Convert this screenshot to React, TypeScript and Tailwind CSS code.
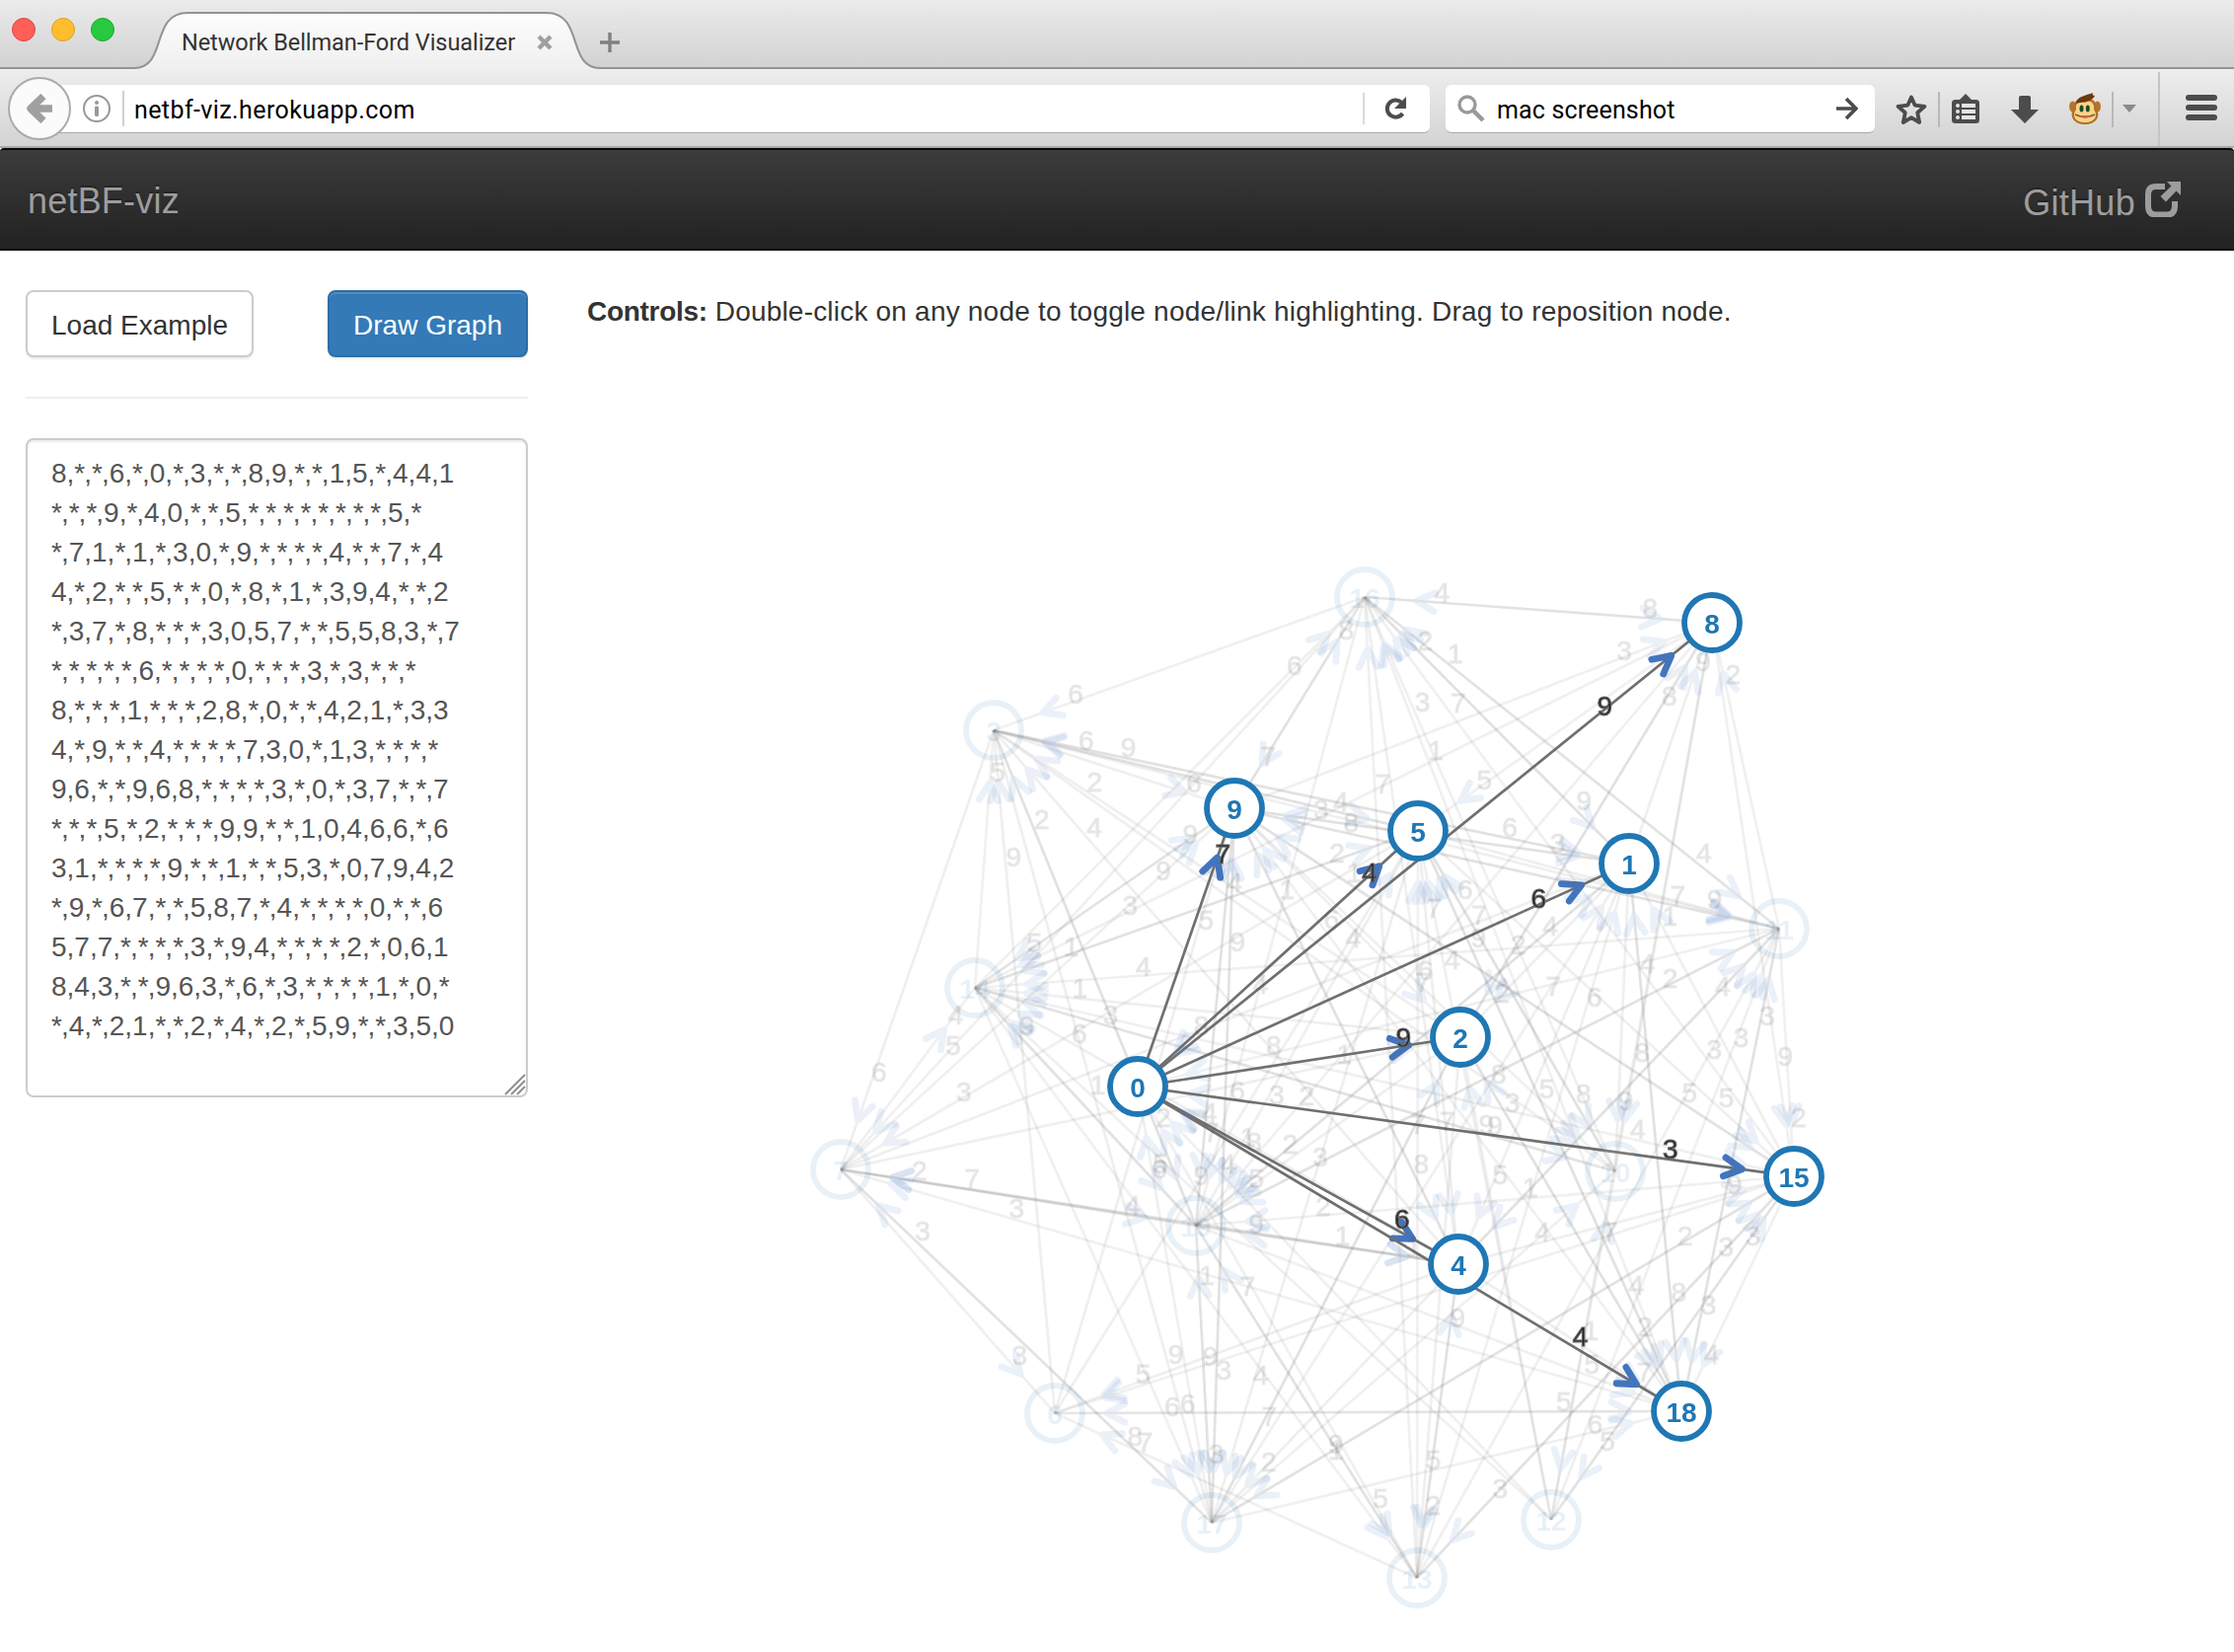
import React from "react";

type Point = [number, number];

const NODES: Point[] = [
  [1153, 1101],
  [1651, 875],
  [1480, 1051],
  [1007, 740],
  [1478, 1281],
  [1437, 842],
  [1069, 1432],
  [852, 1185],
  [1735, 631],
  [1251, 819],
  [1637, 1187],
  [1803, 941],
  [1572, 1540],
  [1436, 1599],
  [988, 1001],
  [1818, 1192],
  [1383, 605],
  [1228, 1543],
  [1704, 1430],
  [1212, 1242],
];

const HIDDEN_ROWS = [
  "0,6,9,*,6,4,*,*,9,7,*,*,*,*,*,3,*,*,4,*",
  "*,0,2,9,5,*,*,*,9,3,9,*,*,*,*,*,2,*,8,2",
  "*,*,0,2,*,*,*,*,8,*,*,*,*,5,1,*,*,7,2,5",
  "*,6,*,0,*,4,*,6,*,6,8,3,*,*,*,*,*,9,*,2",
  "4,*,*,4,0,7,5,7,*,1,*,4,*,2,6,9,*,2,7,9",
];

const VISIBLE_ROWS = [
  "8,*,*,6,*,0,*,3,*,*,8,9,*,*,1,5,*,4,4,1",
  "*,*,*,9,*,4,0,*,*,5,*,*,*,*,*,*,*,*,5,*",
  "*,7,1,*,1,*,3,0,*,9,*,*,*,*,4,*,*,7,*,4",
  "4,*,2,*,*,5,*,*,0,*,8,*,1,*,3,9,4,*,*,2",
  "*,3,7,*,8,*,*,*,3,0,5,7,*,*,5,5,8,3,*,7",
  "*,*,*,*,*,6,*,*,*,*,0,*,*,*,3,*,3,*,*,*",
  "8,*,*,*,1,*,*,*,2,8,*,0,*,*,4,2,1,*,3,3",
  "4,*,9,*,*,4,*,*,*,*,7,3,0,*,1,3,*,*,*,*",
  "9,6,*,*,9,6,8,*,*,*,*,3,*,0,*,3,7,*,*,7",
  "*,*,*,5,*,2,*,*,*,9,9,*,*,1,0,4,6,6,*,6",
  "3,1,*,*,*,*,9,*,*,1,*,*,5,3,*,0,7,9,4,2",
  "*,9,*,6,7,*,*,5,8,7,*,4,*,*,*,*,0,*,*,6",
  "5,7,7,*,*,*,*,3,*,9,4,*,*,*,*,2,*,0,6,1",
  "8,4,3,*,*,9,6,3,*,6,*,3,*,*,*,*,1,*,0,*",
  "*,4,*,2,1,*,*,2,*,4,*,2,*,5,9,*,*,3,5,0",
];

const SELECTED = 0;
const MATRIX = [...HIDDEN_ROWS, ...VISIBLE_ROWS].map((row) => row.split(","));

interface Link {
  source: number;
  target: number;
  weight: string;
}

const LINKS: Link[] = MATRIX.flatMap((row, source) =>
  row.flatMap((weight, target) => (weight === "*" || source === target ? [] : [{ source, target, weight }])),
);

const isLit = (n: number) => n === SELECTED || MATRIX[SELECTED][n] !== "*";

// Canvas origin inside the page
const OX = 595;
const OY = 345;

function Edge({ link }: { link: Link }) {
  const [x1, y1] = NODES[link.source];
  const [x2, y2] = NODES[link.target];
  const angle = (Math.atan2(y2 - y1, x2 - x1) * 180) / Math.PI;
  return (
    <g opacity={link.source === SELECTED ? 1 : 0.1}>
      <line x1={x1} y1={y1} x2={x2} y2={y2} stroke="#707070" strokeWidth={2.7} />
      <path
        d="M-71,-9.5L-53,0L-71,9.5"
        transform={`translate(${x2} ${y2}) rotate(${angle})`}
        fill="none"
        stroke="#4275c0"
        strokeWidth={6.8}
        strokeLinecap="round"
        strokeLinejoin="round"
      />
    </g>
  );
}

function EdgeLabel({ link }: { link: Link }) {
  const [x1, y1] = NODES[link.source];
  const [x2, y2] = NODES[link.target];
  return (
    <text
      x={x1 + (x2 - x1) * 0.8}
      y={y1 + (y2 - y1) * 0.8}
      fontSize={28}
      fill="#1c1c1c"
      stroke="#666"
      strokeWidth={1.2}
      opacity={link.source === SELECTED ? 1 : 0.13}
    >
      {link.weight}
    </text>
  );
}

function Graph() {
  return (
    <svg width={1400} height={1329} viewBox={`${OX} ${OY} 1400 1329`} className="block font-['Liberation_Sans']">
      {LINKS.map((l) => (
        <Edge key={`${l.source}-${l.target}`} link={l} />
      ))}
      {LINKS.map((l) => (
        <EdgeLabel key={`${l.source}-${l.target}`} link={l} />
      ))}
      {NODES.map(([x, y], i) => (
        <g key={i} opacity={isLit(i) ? 1 : 0.1}>
          <circle cx={x} cy={y} r={28} fill="#fff" stroke="#1f77b4" strokeWidth={5.8} />
          <text x={x} y={y + 11} fontSize={28} fontWeight={700} textAnchor="middle" fill="#1f77b4">
            {i}
          </text>
        </g>
      ))}
    </svg>
  );
}

function TabStrip() {
  return (
    <div className="relative flex h-[71px] bg-linear-to-b from-[#ebebeb] to-[#d1d1d1]">
      <div className="flex gap-4 pt-[18px] pl-3">
        <div className="size-6 rounded-full border border-[#e0443e] bg-[#ff5f57]" />
        <div className="size-6 rounded-full border border-[#dea123] bg-[#ffbd2e]" />
        <div className="size-6 rounded-full border border-[#1aab29] bg-[#28c940]" />
      </div>
      <svg className="absolute inset-0" width={2264} height={71}>
        <defs>
          <linearGradient id="tab" x1="0" y1="0" x2="0" y2="1">
            <stop offset="0" stopColor="#fdfdfd" />
            <stop offset="1" stopColor="#eeeeee" />
          </linearGradient>
        </defs>
        <path
          d="M-4,69H136C170,69 152,13 190,13H554C592,13 574,69 608,69H2270V75H-4Z"
          fill="url(#tab)"
          stroke="#939393"
          strokeWidth={2}
        />
      </svg>
      <div className="relative ml-[68px] flex h-full items-center pt-[15px]">
        <span className="w-[340px] font-['Roboto'] text-[24px] tracking-[-0.07px] whitespace-nowrap text-[#333]">
          <span className="inline-block origin-left scale-x-[0.98]">Network Bellman-Ford Visualizer</span>
        </span>
        <svg width={16} height={16} viewBox="0 0 16 16" className="ml-5" stroke="#a0a0a0" strokeWidth={4.4}>
          <path d="M2,2L14,14M14,2L2,14" />
        </svg>
        <svg width={22} height={22} viewBox="0 0 22 22" className="ml-[47px]" stroke="#808080" strokeWidth={3.4}>
          <path d="M11,1V21M1,11H21" />
        </svg>
      </div>
    </div>
  );
}

function Monkey() {
  return (
    <svg width={32} height={34} viewBox="0 0 32 34">
      <ellipse cx={3.5} cy={14} rx={3.5} ry={5.5} fill="#b5742c" />
      <ellipse cx={28.5} cy={14} rx={3.5} ry={5.5} fill="#b5742c" />
      <path d="M16,5C25,5 28,10 28,17C32,24 27,32 16,32C5,32 0,24 4,17C4,10 7,5 16,5Z" fill="#b07028" />
      <path d="M16,10C21,7 26,10 25,17C30,24 25,30 16,30C7,30 2,24 7,17C6,10 11,7 16,10Z" fill="#f8d488" />
      <path d="M7,11C8,3 17,3 24,0C23,2 24,3 26,3C23,9 15,9 7,11Z" fill="#6b3810" />
      <ellipse cx={12.5} cy={16} rx={2} ry={3.5} fill="#1d4c22" />
      <ellipse cx={18.8} cy={16} rx={2} ry={3.5} fill="#1d4c22" />
      <path d="M6,22Q16,27 26,22" fill="none" stroke="#8a5a28" strokeWidth={1.5} />
      <path d="M11,23.5Q16,27 21,23.5Z" fill="#e0604c" stroke="#d0604c" />
    </svg>
  );
}

function Toolbar() {
  return (
    <div className="relative flex h-[79px] items-start border-b-2 border-[#a9a9a9] bg-linear-to-b from-[#ededed] to-[#d3d3d3] pt-[15px]">
      <div className="relative ml-[36px] flex h-[49px] w-[1413px] items-center rounded-r-[6px] border-b border-[#a9a9a9] bg-white">
        <svg width={28} height={28} viewBox="0 0 28 28" className="ml-12">
          <circle cx={14} cy={14} r={13} fill="none" stroke="#999" strokeWidth={2} />
          <rect x={12} y={11.5} width={4} height={10.5} rx={1.5} fill="#999" />
          <circle cx={14} cy={8} r={2} fill="#999" />
        </svg>
        <div className="ml-3 h-9 w-[2px] bg-[#d0d0d0]" />
        <span className="ml-[10px] w-[290px] pt-[3px] font-['Roboto'] text-[25px] tracking-[0.4px] whitespace-nowrap text-black">
          netbf-viz.herokuapp.com
        </span>
        <div className="ml-auto h-8 w-[2px] bg-[#dadada]" />
        <svg width={24} height={24} viewBox="0 0 24 24" className="mr-[23px] ml-[19px]">
          <path d="M18,5.5A8.6,8.6 0 1 0 19.5,17" fill="none" stroke="#4c4c4c" strokeWidth={4} />
          <path d="M23,0V12H11Z" fill="#4c4c4c" />
        </svg>
      </div>
      <div className="absolute top-[7px] left-[8px] flex size-16 items-center justify-center rounded-full border-2 border-[#ababab] bg-[#fbfbfb]">
        <svg width={28} height={30} viewBox="0 0 28 30" fill="none" stroke="#a0a0a0" strokeWidth={7.5} strokeLinejoin="round">
          <path d="M5,15H27M18,2.5L5,15L18,27.5" />
        </svg>
      </div>
      <div className="ml-4 flex h-[49px] w-[435px] items-center rounded-[6px] border-b border-[#a9a9a9] bg-white">
        <svg width={28} height={28} viewBox="0 0 28 28" className="ml-3" fill="none" stroke="#999">
          <circle cx={10} cy={10} r={8} strokeWidth={3.4} />
          <path d="M16,16L26,26" strokeWidth={4.4} />
        </svg>
        <span className="ml-3 w-[190px] pt-[3px] font-['Roboto'] text-[25px] tracking-[0.15px] whitespace-nowrap text-black">
          mac screenshot
        </span>
        <svg width={22} height={24} viewBox="0 0 22 24" className="mr-[17px] ml-auto" fill="none" stroke="#4c4c4c" strokeWidth={3.6}>
          <path d="M0,12H19M10,2L20,12L10,22" />
        </svg>
      </div>
      <div className="flex h-[49px] items-center">
        <svg width={34} height={34} viewBox="0 0 34 34" className="ml-5">
          <path
            d="M17,4.5L20.6,12.6L30.5,13.8L23.2,20.2L25.2,30L17,25.2L8.8,30L10.8,20.2L3.5,13.8L13.4,12.6Z"
            fill="none"
            stroke="#4c4c4c"
            strokeWidth={3.8}
            strokeLinejoin="round"
          />
        </svg>
        <div className="ml-[10px] h-9 w-[2px] bg-[#b8b8b8]" />
        <svg width={28} height={30} viewBox="0 0 28 30" className="-mt-[2px] ml-3">
          <path d="M14,0L20,6H8Z" fill="#4c4c4c" />
          <rect y={6} width={28} height={24} rx={3.5} fill="#4c4c4c" />
          <circle cx={6} cy={12} r={2} fill="#e4e4e4" />
          <circle cx={6} cy={18} r={2} fill="#e4e4e4" />
          <circle cx={6} cy={24} r={2} fill="#e4e4e4" />
          <rect x={10} y={10} width={14} height={4} fill="#e4e4e4" />
          <rect x={10} y={16} width={14} height={4} fill="#e4e4e4" />
          <rect x={10} y={22} width={14} height={4} fill="#e4e4e4" />
        </svg>
        <svg width={28} height={28} viewBox="0 0 28 28" className="ml-8">
          <path d="M10,0H18Q20,0 20,2V14H28L14,28L0,14H8V2Q8,0 10,0Z" fill="#4c4c4c" />
        </svg>
        <div className="ml-[31px]">
          <Monkey />
        </div>
        <div className="ml-[11px] h-9 w-[2px] bg-[#b8b8b8]" />
        <svg width={14} height={8} viewBox="0 0 14 8" className="-mt-[2px] ml-[9px]">
          <path d="M0,0H14L7,8Z" fill="#8a8a8a" />
        </svg>
      </div>
      <div className="-mt-[13px] ml-[22px] h-[75px] w-[2px] bg-[#c4c4c4]" />
      <div className="mt-[10px] ml-[26px] flex flex-col gap-1">
        <div className="h-[6px] w-8 rounded-full bg-[#4c4c4c]" />
        <div className="h-[6px] w-8 rounded-full bg-[#4c4c4c]" />
        <div className="h-[6px] w-8 rounded-full bg-[#4c4c4c]" />
      </div>
    </div>
  );
}

function Navbar() {
  return (
    <nav className="flex h-[104px] items-center justify-between rounded-t-[4px] border-y-2 border-[#080808] bg-linear-to-b from-[#3c3c3c] to-[#222] pr-[54px] pl-[28px] font-['Liberation_Sans'] text-[36px] text-[#9d9d9d] [text-shadow:0_-2px_0_rgba(0,0,0,.25)]">
      <span className="inline-block pt-1 tracking-[0.2px] whitespace-nowrap">netBF-viz</span>
      <span className="flex items-center gap-[10px]">
        <span className="pt-2 tracking-[0.3px] whitespace-nowrap">GitHub</span>
        <svg width={36} height={36} viewBox="0 0 36 36">
          <path
            d="M20,5H11Q3,5 3,13V25Q3,33.500 11,33.500H22Q30,33.500 30,25V20"
            fill="none"
            stroke="#9d9d9d"
            strokeWidth={6}
          />
          <path d="M22,0H36V14L31.500,9.500L21,20.500L15.500,15L26.500,4.500Z" fill="#9d9d9d" />
        </svg>
      </span>
    </nav>
  );
}

// Asterisks are set slightly tighter than the digits around them
function MatrixRow({ row }: { row: string }) {
  return (
    <div className="whitespace-nowrap">
      {row.split(/(\*)/).map((part, i) =>
        part === "*" ? (
          <span key={i} className="tracking-[-1px]">
            *
          </span>
        ) : (
          part
        ),
      )}
    </div>
  );
}

function Sidebar() {
  return (
    <aside className="flex w-[509px] shrink-0 flex-col">
      <div className="flex justify-between text-[28px]">
        <button className="h-[68px] w-[231px] rounded-lg border-2 border-[#ccc] bg-white pt-[3px] whitespace-nowrap text-[#333] shadow-[0_2px_2px_rgba(0,0,0,.075)]">
          Load Example
        </button>
        <button className="h-[68px] w-[203px] rounded-lg border-2 border-[#2e6da4] bg-[#337ab7] pt-[3px] whitespace-nowrap text-white shadow-[inset_0_2px_0_rgba(255,255,255,.15),0_2px_2px_rgba(0,0,0,.075)]">
          Draw Graph
        </button>
      </div>
      <hr className="mt-10 border-t-2 border-[#eee]" />
      <div className="relative mt-10 h-[668px] rounded-lg border-2 border-[#ccc] bg-white px-6 pt-[14px] text-[28px] leading-[40px] text-[#555] shadow-[inset_0_2px_2px_rgba(0,0,0,.075)]">
        {VISIBLE_ROWS.map((row) => (
          <MatrixRow key={row} row={row} />
        ))}
        <svg width={22} height={22} viewBox="0 0 22 22" className="absolute right-0 bottom-0" stroke="#8c8c8c" strokeWidth={1.8}>
          <path d="M1,21L21,1M7,21L21,7M13,21L21,13" />
        </svg>
      </div>
    </aside>
  );
}

export default function App() {
  return (
    <div className="h-[1674px] w-[2264px] overflow-hidden bg-white">
      <TabStrip />
      <Toolbar />
      <Navbar />
      <main className="flex pl-[26px] font-['Liberation_Sans']">
        <div className="pt-10">
          <Sidebar />
        </div>
        <section className="ml-[60px] flex flex-col">
          <p className="mt-[42px] h-[49px] text-[28px] leading-[40px] tracking-[0.2px] whitespace-nowrap text-[#333]">
            <b className="tracking-[-0.3px]">Controls:</b> Double-click on any node to toggle node/link highlighting. Drag
            to reposition node.
          </p>
          <Graph />
        </section>
      </main>
    </div>
  );
}
